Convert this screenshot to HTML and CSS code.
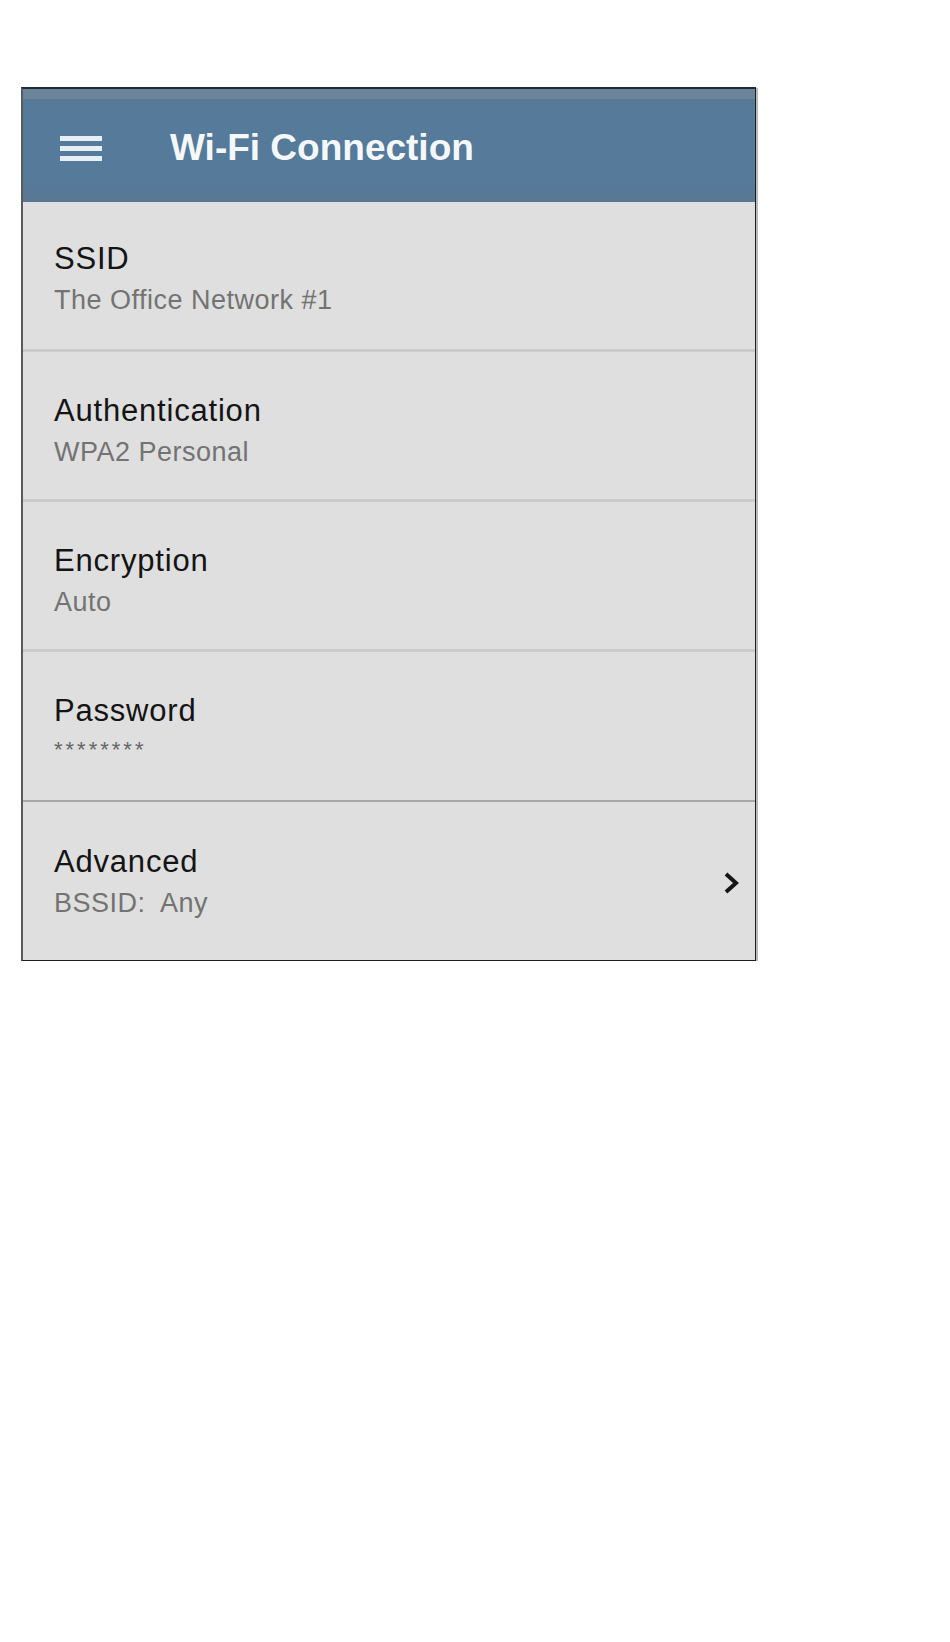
FILE: index.html
```html
<!DOCTYPE html>
<html>

<head>
	<title>Wi-Fi Connection</title>
	<meta charset="utf-8">
	<link rel="stylesheet" href="styles.css">
</head>

<body>
	<div class="tela">
		<div class="topo">
			<svg class="menu" width="42" height="25" viewBox="0 0 42 25">
				<rect x="0" y="0" width="42" height="5" fill="#e6eef6"></rect>
				<rect x="0" y="10" width="42" height="5" fill="#e6eef6"></rect>
				<rect x="0" y="20" width="42" height="5" fill="#e6eef6"></rect>
			</svg>
			<span class="titulo">Wi-Fi Connection</span>
		</div>
		<div class="item primeiro">
			<div class="texto">
				<p class="rotulo">SSID</p>
				<p class="valor">The Office Network #1</p>
			</div>
		</div>
		<div class="item">
			<div class="texto">
				<p class="rotulo">Authentication</p>
				<p class="valor">WPA2 Personal</p>
			</div>
		</div>
		<div class="item">
			<div class="texto">
				<p class="rotulo">Encryption</p>
				<p class="valor">Auto</p>
			</div>
		</div>
		<div class="item escuro">
			<div class="texto">
				<p class="rotulo">Password</p>
				<p class="valor senha">********</p>
			</div>
		</div>
		<div class="item ultimo">
			<div class="texto">
				<p class="rotulo">Advanced</p>
				<p class="valor">BSSID:&nbsp; Any</p>
			</div>
			<svg class="seta" width="16" height="24" viewBox="0 0 16 24">
				<path d="M3 3 L13 12 L3 21" fill="none" stroke="#161616" stroke-width="4"></path>
			</svg>
		</div>
	</div>
</body>

</html>
```

FILE: styles.css
```css
* {
	margin: 0;
	box-sizing: border-box;
}

body {
	background-color: #ffffff;
	font-family: "Liberation Sans", Arial, sans-serif;
}

.tela {
	width: 735px;
	margin-left: 21px;
	margin-top: 87px;
	border-top: 2px solid #1d2c3b;
	border-left: 2px solid #5a5a5a;
	border-right: 1px solid #1e1e1e;
	border-bottom: 1px solid #1e1e1e;
	box-shadow: 2px 1px 0 #b9b9b9;
	background-color: #dfdfdf;
}

.topo {
	height: 113px;
	display: flex;
	align-items: center;
	padding-left: 37px;
	background: linear-gradient(#6b8499 0, #6b8499 10px, #557a9a 10px, #557a9a 92px, #5a7893 100%);
}

.menu {
	display: block;
	margin-top: 5px;
}

.titulo {
	margin-left: 68px;
	color: #f4f8fb;
	font-size: 37px;
	font-weight: bold;
	margin-top: 4px;
}

.item {
	height: 150px;
	display: flex;
	align-items: flex-start;
	padding-top: 42px;
	padding-left: 31px;
	padding-right: 16px;
	border-bottom: 3px solid #cbcbcb;
}

.item.primeiro {
	padding-top: 40px;
}

.item.escuro {
	border-bottom: 2px solid #a8a8a8;
}

.item.ultimo {
	height: 158px;
	border-bottom: none;
	padding-top: 43px;
}

.texto {
	flex: 1;
}

.rotulo {
	color: #141414;
	font-size: 31px;
	line-height: 34px;
	letter-spacing: 0.8px;
}

.valor {
	color: #737373;
	font-size: 27px;
	line-height: 30px;
	letter-spacing: 0.5px;
	margin-top: 9px;
}

.senha {
	font-size: 22px;
	letter-spacing: 3px;
	line-height: 24px;
	margin-top: 10px;
	color: #666666;
}

.seta {
	display: block;
	margin-top: 26px;
}
```
